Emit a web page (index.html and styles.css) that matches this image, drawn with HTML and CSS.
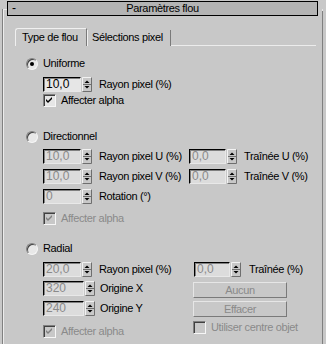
FILE: index.html
```html
<!DOCTYPE html>
<html>
<head>
<meta charset="utf-8">
<link rel="stylesheet" href="styles.css">
</head>
<body>
<div class="panel">
  <div class="frame">
    <div class="titlerow">
      <span class="corner"></span>
      <div class="title"><span class="minus">-</span><span class="ttext">Paramètres flou</span><span></span></div>
    </div>
    <div class="tabs">
      <div class="tab active">Type de flou</div>
      <div class="tab second">Sélections pixel</div>
      <div class="tabfill"></div>
    </div>
    <div class="content">
      <!-- Uniforme -->
      <div class="radiorow"><span class="radio on"><span class="dot"></span></span><span class="rlbl">Uniforme</span></div>
      <div class="sub">
        <div class="row mt7"><span class="field">10,0</span><svg class="spin" width="10" height="15" viewBox="0 0 10 15"><path d="M0.5 14.5V0.5H9.5" fill="none" stroke="#f2f2f2"/><path d="M9.5 0.5V14.5H0.5" fill="none" stroke="#6e6e6e"/><path d="M1 7.5H9" stroke="#6e6e6e"/><polygon points="2.5,6 7.5,6 5,3.5" fill="#000"/><polygon points="2.5,9 7.5,9 5,11.5" fill="#000"/></svg><span class="lbl">Rayon pixel (%)</span></div>
        <div class="checkrow mt2"><span class="check"><svg width="11" height="11" viewBox="0 0 11 11"><path d="M2 4L4 6L8 2V4L4 8L2 6Z" fill="#000"/></svg></span><span class="clbl">Affecter alpha</span></div>
      </div>

      <!-- Directionnel -->
      <div class="radiorow mt23"><span class="radio"></span><span class="rlbl">Directionnel</span></div>
      <div class="sub">
        <div class="grid2 dirgrid mt6">
          <div class="row"><span class="field dis">10,0</span><svg class="spin" width="10" height="15" viewBox="0 0 10 15"><path d="M0.5 14.5V0.5H9.5" fill="none" stroke="#f2f2f2"/><path d="M9.5 0.5V14.5H0.5" fill="none" stroke="#6e6e6e"/><path d="M1 7.5H9" stroke="#6e6e6e"/><polygon points="2.5,6 7.5,6 5,3.5" fill="#000"/><polygon points="2.5,9 7.5,9 5,11.5" fill="#000"/></svg><span class="lbl">Rayon pixel U (%)</span></div>
          <div class="row"><span class="field dis w37">0,0</span><svg class="spin" width="10" height="15" viewBox="0 0 10 15"><path d="M0.5 14.5V0.5H9.5" fill="none" stroke="#f2f2f2"/><path d="M9.5 0.5V14.5H0.5" fill="none" stroke="#6e6e6e"/><path d="M1 7.5H9" stroke="#6e6e6e"/><polygon points="2.5,6 7.5,6 5,3.5" fill="#000"/><polygon points="2.5,9 7.5,9 5,11.5" fill="#000"/></svg><span class="lbl">Traînée U (%)</span></div>
          <div class="row"><span class="field dis">10,0</span><svg class="spin" width="10" height="15" viewBox="0 0 10 15"><path d="M0.5 14.5V0.5H9.5" fill="none" stroke="#f2f2f2"/><path d="M9.5 0.5V14.5H0.5" fill="none" stroke="#6e6e6e"/><path d="M1 7.5H9" stroke="#6e6e6e"/><polygon points="2.5,6 7.5,6 5,3.5" fill="#000"/><polygon points="2.5,9 7.5,9 5,11.5" fill="#000"/></svg><span class="lbl">Rayon pixel V (%)</span></div>
          <div class="row"><span class="field dis w37">0,0</span><svg class="spin" width="10" height="15" viewBox="0 0 10 15"><path d="M0.5 14.5V0.5H9.5" fill="none" stroke="#f2f2f2"/><path d="M9.5 0.5V14.5H0.5" fill="none" stroke="#6e6e6e"/><path d="M1 7.5H9" stroke="#6e6e6e"/><polygon points="2.5,6 7.5,6 5,3.5" fill="#000"/><polygon points="2.5,9 7.5,9 5,11.5" fill="#000"/></svg><span class="lbl">Traînée V (%)</span></div>
          <div class="row"><span class="field dis">0</span><svg class="spin" width="10" height="15" viewBox="0 0 10 15"><path d="M0.5 14.5V0.5H9.5" fill="none" stroke="#f2f2f2"/><path d="M9.5 0.5V14.5H0.5" fill="none" stroke="#6e6e6e"/><path d="M1 7.5H9" stroke="#6e6e6e"/><polygon points="2.5,6 7.5,6 5,3.5" fill="#000"/><polygon points="2.5,9 7.5,9 5,11.5" fill="#000"/></svg><span class="lbl">Rotation (°)</span></div>
        </div>
        <div class="checkrow dis mt8"><span class="check"><svg width="11" height="11" viewBox="0 0 11 11"><path d="M2 4L4 6L8 2V4L4 8L2 6Z" fill="#808080"/></svg></span><span class="clbl">Affecter alpha</span></div>
      </div>

      <!-- Radial -->
      <div class="radiorow mt17"><span class="radio"></span><span class="rlbl">Radial</span></div>
      <div class="sub">
        <div class="grid2 radgrid mt7">
          <div class="col">
            <div class="row"><span class="field dis">20,0</span><svg class="spin" width="10" height="15" viewBox="0 0 10 15"><path d="M0.5 14.5V0.5H9.5" fill="none" stroke="#f2f2f2"/><path d="M9.5 0.5V14.5H0.5" fill="none" stroke="#6e6e6e"/><path d="M1 7.5H9" stroke="#6e6e6e"/><polygon points="2.5,6 7.5,6 5,3.5" fill="#000"/><polygon points="2.5,9 7.5,9 5,11.5" fill="#000"/></svg><span class="lbl">Rayon pixel (%)</span></div>
            <div class="row mt4"><span class="field dis w41">320</span><svg class="spin" width="10" height="15" viewBox="0 0 10 15"><path d="M0.5 14.5V0.5H9.5" fill="none" stroke="#f2f2f2"/><path d="M9.5 0.5V14.5H0.5" fill="none" stroke="#6e6e6e"/><path d="M1 7.5H9" stroke="#6e6e6e"/><polygon points="2.5,6 7.5,6 5,3.5" fill="#000"/><polygon points="2.5,9 7.5,9 5,11.5" fill="#000"/></svg><span class="lbl l5">Origine X</span></div>
            <div class="row mt5"><span class="field dis w41">240</span><svg class="spin" width="10" height="15" viewBox="0 0 10 15"><path d="M0.5 14.5V0.5H9.5" fill="none" stroke="#f2f2f2"/><path d="M9.5 0.5V14.5H0.5" fill="none" stroke="#6e6e6e"/><path d="M1 7.5H9" stroke="#6e6e6e"/><polygon points="2.5,6 7.5,6 5,3.5" fill="#000"/><polygon points="2.5,9 7.5,9 5,11.5" fill="#000"/></svg><span class="lbl l5">Origine Y</span></div>
            <div class="checkrow dis mt9"><span class="check"><svg width="11" height="11" viewBox="0 0 11 11"><path d="M2 4L4 6L8 2V4L4 8L2 6Z" fill="#808080"/></svg></span><span class="clbl">Affecter alpha</span></div>
          </div>
          <div class="col">
            <div class="row"><span class="field dis w36 ml1">0,0</span><svg class="spin" width="10" height="15" viewBox="0 0 10 15"><path d="M0.5 14.5V0.5H9.5" fill="none" stroke="#f2f2f2"/><path d="M9.5 0.5V14.5H0.5" fill="none" stroke="#6e6e6e"/><path d="M1 7.5H9" stroke="#6e6e6e"/><polygon points="2.5,6 7.5,6 5,3.5" fill="#000"/><polygon points="2.5,9 7.5,9 5,11.5" fill="#000"/></svg><span class="lbl l8">Traînée (%)</span></div>
            <div class="btn mt5">Aucun</div>
            <div class="btn mt3">Effacer</div>
            <div class="checkrow dis mt4"><span class="check"></span><span class="clbl">Utiliser centre objet</span></div>
          </div>
        </div>
      </div>
    </div>
  </div>
  <div class="scroll"></div>
</div>
</body>
</html>
```

FILE: styles.css
```css
html, body {
  margin: 0;
  padding: 0;
  background: #c8c8c8;
}
body {
  width: 326px;
  height: 344px;
  overflow: hidden;
  font-family: "Liberation Sans", Arial, sans-serif;
  font-size: 11px;
  line-height: 13px;
  letter-spacing: -0.35px;
  color: #000;
}
.panel {
  display: flex;
  height: 344px;
  padding-top: 1px;
  box-sizing: border-box;
}
.frame {
  width: 318px;
  margin-left: 2px;
  margin-top: 8px;
  border-left: 1px solid #808080;
  box-shadow: inset 1px 0 #ececec;
}
.scroll {
  width: 1px;
  margin-left: 1px;
  margin-top: 8px;
  background: #808080;
  border-top: 2px solid #e4e4e4;
}
.titlerow {
  display: flex;
  margin-top: -8px;
  height: 15px;
}
.corner {
  width: 4px;
  height: 1px;
  margin-top: 8px;
  background: #ececec;
}
.title {
  width: 311px;
  height: 15px;
  box-sizing: border-box;
  border: 1px solid #000;
  background: #b4b4b4;
  display: grid;
  grid-template-columns: 1fr auto 1fr;
  align-items: center;
}
.minus {
  padding-left: 4px;
  font-size: 12px;
}
.ttext {
  text-align: center;
}
.tabs {
  display: flex;
  margin-top: 12px;
  margin-left: 12px;
  height: 18px;
}
.tab {
  box-sizing: border-box;
  height: 18px;
}
.tab.active {
  width: 72px;
  border-top: 1px solid #f0f0f0;
  border-left: 1px solid #f0f0f0;
  border-right: 1px solid #7a7a7a;
  border-top-left-radius: 3px;
  padding: 2px 0 0 6px;
}
.tab.second {
  width: 84px;
  margin-top: 2px;
  height: 16px;
  border-left: 1px solid #f0f0f0;
  border-right: 1px solid #7a7a7a;
  padding: 1px 0 0 4px;
}
.tabfill {
  width: 145px;
  height: 18px;
  box-sizing: border-box;
  border-bottom: 1px solid #ececec;
}
.content {
  padding-left: 23px;
  margin-top: 11px;
}
.radiorow {
  display: flex;
  align-items: flex-start;
  height: 13px;
}
.radio {
  box-sizing: border-box;
  width: 12px;
  height: 12px;
  margin-top: 1px;
  border-radius: 50%;
  border: 1px solid;
  border-color: #808080 #f6f6f6 #f6f6f6 #808080;
  background: #e8e8e8;
  box-shadow: inset 1px 1px #404040;
  display: flex;
  align-items: center;
  justify-content: center;
}
.dot {
  width: 4px;
  height: 4px;
  border-radius: 50%;
  background: #000;
}
.rlbl {
  margin-left: 5px;
}
.sub {
  margin-left: 17px;
}
.row {
  display: flex;
  align-items: center;
  height: 15px;
}
.field {
  box-sizing: border-box;
  width: 38px;
  height: 15px;
  border: 1px solid;
  border-color: #000 #e8e8e8 #e8e8e8 #000;
  box-shadow: inset 1px 1px #808080;
  background: #e6e6e6;
  font-size: 12px;
  line-height: 13px;
  letter-spacing: 0;
  padding-left: 2px;
  white-space: nowrap;
}
.field.dis {
  background: #dcdcdc;
  color: #8a8a8a;
}
.w37 { width: 37px; }
.w41 { width: 41px; }
.w36 { width: 36px; }
.ml1 { margin-left: 1px; }
.spin {
  display: block;
  margin-left: 1px;
  flex: none;
}
.lbl {
  margin-left: 7px;
  white-space: nowrap;
}
.l5 { margin-left: 5px; }
.l8 { margin-left: 8px; }
.checkrow {
  display: flex;
  align-items: center;
  height: 13px;
}
.check {
  box-sizing: border-box;
  width: 13px;
  height: 13px;
  border: 1px solid;
  border-color: #808080 #f6f6f6 #f6f6f6 #808080;
  box-shadow: inset 1px 1px #404040;
  background: #e6e6e6;
  display: block;
  flex: none;
}
.check svg {
  display: block;
}
.checkrow.dis .check {
  background: #c8c8c8;
}
.checkrow.dis .clbl {
  color: #8a8a8a;
}
.clbl {
  margin-left: 5px;
  white-space: nowrap;
}
.grid2 {
  display: grid;
}
.dirgrid {
  grid-template-columns: 146px auto;
  row-gap: 5px;
}
.radgrid {
  grid-template-columns: 150px auto;
}
.col {
  display: flex;
  flex-direction: column;
}
.btn {
  box-sizing: border-box;
  width: 94px;
  height: 16px;
  border: 1px solid;
  border-color: #e6e6e6 #7a7a7a #7a7a7a #e6e6e6;
  color: #8a8a8a;
  text-align: center;
  line-height: 14px;
}
.mt2 { margin-top: 2px; }
.mt3 { margin-top: 3px; }
.mt4 { margin-top: 4px; }
.mt5 { margin-top: 5px; }
.mt6 { margin-top: 6px; }
.mt7 { margin-top: 7px; }
.mt8 { margin-top: 8px; }
.mt9 { margin-top: 9px; }
.mt17 { margin-top: 17px; }
.mt23 { margin-top: 23px; }
```
